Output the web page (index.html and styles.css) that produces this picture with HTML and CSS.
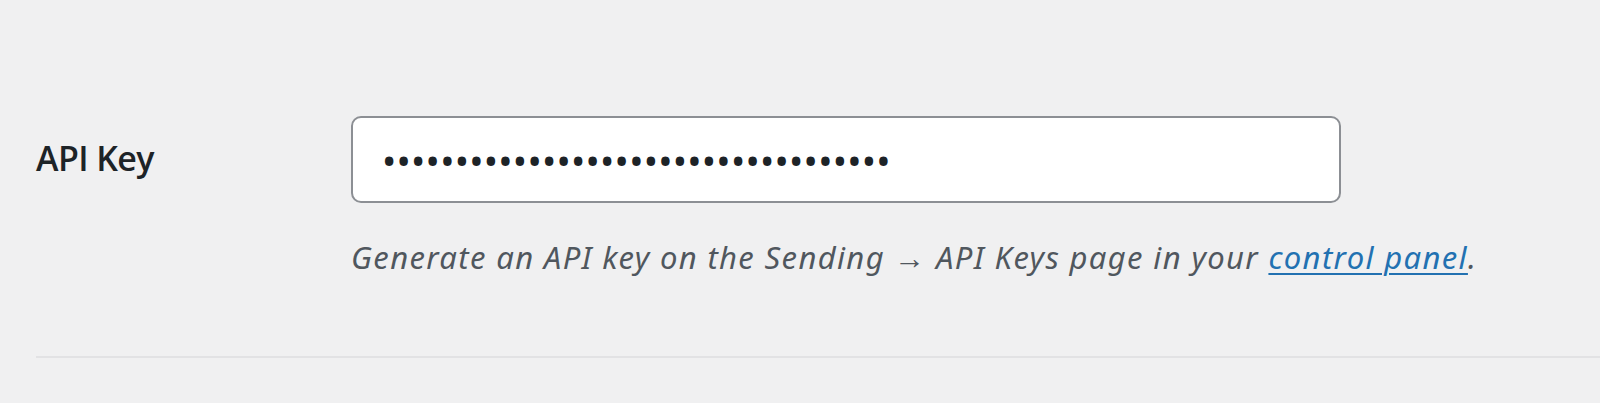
FILE: index.html
```html
<!DOCTYPE html>
<html lang="en">
<head>
<meta charset="utf-8">
<title>API Key</title>
<link rel="stylesheet" href="styles.css">
</head>
<body>
<div class="wrap">
  <div class="form-row">
    <label class="row-label" for="api-key">API Key</label>
    <div class="row-field">
      <input id="api-key" class="key-input" type="password" value="abcdefghijklmnopqrstuvwxyz012345678" readonly>
      <p class="description">Generate an API key on the Sending → API Keys page in your <a href="#">control panel</a>.</p>
    </div>
  </div>
</div>
</body>
</html>
```
FILE: styles.css
```css
html, body {
  margin: 0;
  padding: 0;
  background: #f0f0f1;
}
body {
  font-family: "Noto Sans", "Open Sans", sans-serif;
  color: #1d2327;
  height: 403px;
  overflow: hidden;
}
.wrap {
  padding: 78px 0 0 36px;
}
.form-row {
  display: flex;
  align-items: flex-start;
  border-bottom: 2px solid #e2e2e4;
  padding-bottom: 76px;
}
.row-label {
  width: 315px;
  flex: none;
  font-family: "Open Sans", "Noto Sans", sans-serif;
  font-size: 34px;
  font-weight: 600;
  letter-spacing: -0.6px;
  line-height: 46px;
  margin-top: 57px;
  color: #1d2327;
}
.row-field {
  flex: 1;
  padding-top: 38px;
}
.key-input {
  display: block;
  box-sizing: border-box;
  width: 990px;
  height: 87px;
  margin: 0;
  padding: 0 29px;
  border: 2px solid #8c8f94;
  border-radius: 10px;
  background: #fff;
  color: #1d2327;
  font-family: "Noto Sans", sans-serif;
  font-size: 38px;
  letter-spacing: 0.25px;
  outline: none;
}
.description {
  margin: 31px 0 0;
  font-size: 31px;
  line-height: 46px;
  font-style: italic;
  letter-spacing: 1.35px;
  color: #50575e;
}
.description a {
  color: #2271b1;
  text-decoration: underline;
  text-decoration-thickness: 2px;
  text-underline-offset: 4px;
}
```
